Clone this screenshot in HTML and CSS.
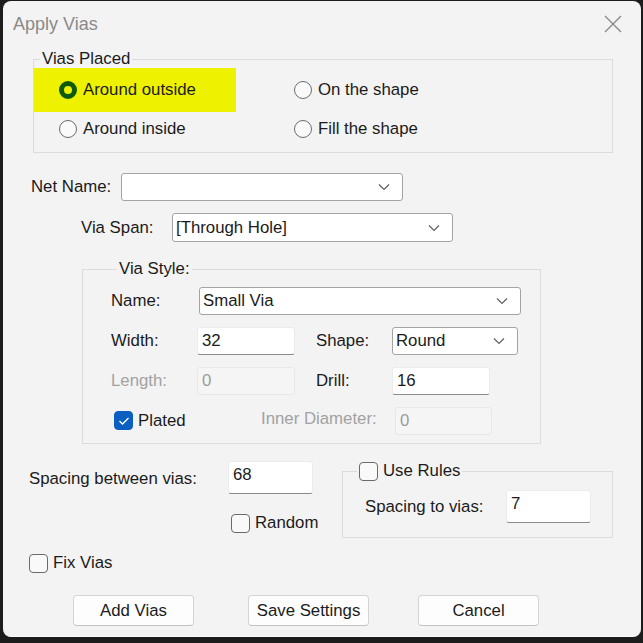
FILE: index.html
```html
<!DOCTYPE html>
<html>
<head>
<meta charset="utf-8">
<link rel="stylesheet" href="styles.css">
</head>
<body>
<div class="window">
  <div class="titlebar">
    <span class="title">Apply Vias</span>
    <svg class="close" width="18" height="18" viewBox="0 0 18 18"><path d="M1 1 L17 17 M17 1 L1 17" stroke="#8a8a8a" stroke-width="1.4" fill="none"/></svg>
  </div>

  <fieldset class="group placed">
    <legend>Vias Placed</legend>
    <div class="placed-grid">
      <label class="opt hl"><span class="radio on"></span>Around outside</label>
      <label class="opt"><span class="radio"></span>On the shape</label>
      <label class="opt row2"><span class="radio"></span>Around inside</label>
      <label class="opt row2"><span class="radio"></span>Fill the shape</label>
    </div>
  </fieldset>

  <div class="row netname">
    <span class="lbl">Net Name:</span>
    <div class="combo w-net"><span class="val"></span><svg class="chev" width="12" height="8" viewBox="0 0 12 8"><path d="M1 1.5 L6 6.5 L11 1.5" stroke="#606060" stroke-width="1.2" fill="none"/></svg></div>
  </div>

  <div class="row viaspan">
    <span class="lbl">Via Span:</span>
    <div class="combo w-span"><span class="val">[Through Hole]</span><svg class="chev" width="12" height="8" viewBox="0 0 12 8"><path d="M1 1.5 L6 6.5 L11 1.5" stroke="#606060" stroke-width="1.2" fill="none"/></svg></div>
  </div>

  <fieldset class="group style">
    <legend>Via Style:</legend>
    <div class="srow r-name">
      <span class="slbl">Name:</span>
      <div class="combo w-name"><span class="val">Small Via</span><svg class="chev" width="12" height="8" viewBox="0 0 12 8"><path d="M1 1.5 L6 6.5 L11 1.5" stroke="#606060" stroke-width="1.2" fill="none"/></svg></div>
    </div>
    <div class="srow r-width">
      <span class="slbl">Width:</span>
      <div class="edit w98">32</div>
      <span class="slbl2">Shape:</span>
      <div class="combo w-shape"><span class="val">Round</span><svg class="chev" width="12" height="8" viewBox="0 0 12 8"><path d="M1 1.5 L6 6.5 L11 1.5" stroke="#606060" stroke-width="1.2" fill="none"/></svg></div>
    </div>
    <div class="srow r-length">
      <span class="slbl dis">Length:</span>
      <div class="edit w98 disabled">0</div>
      <span class="slbl2">Drill:</span>
      <div class="edit w98">16</div>
    </div>
    <div class="srow r-plated">
      <label class="chk-label plated"><span class="check on"><svg width="12" height="10" viewBox="0 0 12 10"><path d="M1.5 5 L4.5 8 L10.5 2" stroke="#ffffff" stroke-width="1.4" fill="none"/></svg></span>Plated</label>
      <span class="inner-lbl dis">Inner Diameter:</span>
      <div class="edit w97 disabled">0</div>
    </div>
  </fieldset>

  <div class="lower">
    <div class="left-col">
      <div class="sp-row">
        <span class="sp-lbl">Spacing between vias:</span>
        <div class="edit tall">68</div>
      </div>
      <label class="chk-label random"><span class="check"></span>Random</label>
      <label class="chk-label fixvias"><span class="check"></span>Fix Vias</label>
    </div>
    <fieldset class="group rules">
      <legend><label class="chk-label"><span class="check"></span>Use Rules</label></legend>
      <div class="rules-row">
        <span class="rl-lbl">Spacing to vias:</span>
        <div class="edit tall">7</div>
      </div>
    </fieldset>
  </div>

  <div class="buttons">
    <button class="btn b1">Add Vias</button>
    <button class="btn b2">Save Settings</button>
    <button class="btn b3">Cancel</button>
  </div>
</div>
</body>
</html>
```
FILE: styles.css
```css
* { box-sizing: border-box; }
html, body { margin: 0; padding: 0; }
body {
  width: 643px;
  height: 643px;
  background: #1c1c1c;
  font-family: "Liberation Sans", Arial, sans-serif;
  font-size: 16.8px;
  color: #1b1b1b;
  overflow: hidden;
  padding: 1px 2px 0 3px;
}
.window {
  width: 638px;
  height: 636px;
  background: #f3f3f3;
  border-radius: 8px;
  border-bottom: 1px solid #fafafa;
  position: relative;
}
.titlebar {
  height: 46px;
  display: flex;
  align-items: center;
  justify-content: space-between;
  padding: 0 19px 0 10px;
}
.title {
  font-size: 18px;
  color: #8a8a8a;
}

.group {
  border: 1px solid #dcdcdc;
  margin: 0;
  padding: 0;
  min-width: 0;
}
.group legend {
  margin-left: 6px;
  padding: 0 2px;
  line-height: 16px;
}
.placed {
  margin: 4px 0 0 30px;
  width: 580px;
  height: 102px;
}
.placed-grid {
  display: grid;
  grid-template-columns: 260px auto;
  grid-template-rows: 44px 32px;
  padding-top: 1px;
}
.opt {
  display: flex;
  align-items: center;
  gap: 6px;
}
.opt.hl {
  background: #eef200;
  width: 202px;
  padding-left: 25px;
}
.radio {
  width: 18px;
  height: 18px;
  border-radius: 50%;
  border: 1px solid #6c6c6c;
  background: #fafafa;
  display: inline-block;
  flex: none;
}
.row2 { padding-top: 1px; }
.row2:nth-child(3) { padding-left: 25px; }
.radio.on {
  border: 5px solid #0d5a07;
  background: #eef200;
}

.row {
  display: flex;
  align-items: center;
}
.netname { margin: 20px 0 0 28px; height: 28px; }
.netname .lbl { width: 90px; }
.viaspan { margin: 12px 0 0 78px; height: 29px; }
.viaspan .lbl { width: 91px; }

.combo {
  height: 28px;
  background: #ffffff;
  border: 1px solid #a4a4a4;
  border-radius: 3px;
  display: flex;
  align-items: center;
  justify-content: space-between;
  padding: 0 12px 0 3px;
}
.w-net { width: 282px; }
.w-span { width: 281px; height: 29px; }
.w-name { width: 322px; margin-left: 2px; }
.w-shape { width: 126px; }

.style {
  margin: 19px 0 0 79px;
  width: 459px;
  height: 183px;
  padding: 10px 0 0 28px;
}
.srow {
  display: flex;
  align-items: center;
  height: 28px;
}
.r-width { margin-top: 12px; }
.r-length { margin-top: 12px; }
.r-plated { margin-top: 12px; height: 27px; }
.slbl { width: 86px; }
.slbl2 { width: 76px; margin-left: 21px; }
.dis { color: #a2a2a2; }

.edit {
  height: 28px;
  background: #ffffff;
  border: 1px solid #ececec;
  border-bottom: 1px solid #8a8a8a;
  border-radius: 3px;
  padding: 3px 4px 0 4px;
  line-height: 20px;
}
.edit.disabled {
  background: #f5f5f5;
  border: 1px solid #e8e8e8;
  color: #9c9c9c;
}
.w98 { width: 98px; }
.w97 { width: 97px; }
.edit.tall { width: 85px; height: 33px; padding-top: 3px; }

.chk-label {
  display: flex;
  align-items: center;
  gap: 5px;
}
.check {
  width: 19px;
  height: 19px;
  border: 1px solid #6a6a6a;
  border-radius: 4px;
  background: #f9f9f9;
  display: inline-flex;
  align-items: center;
  justify-content: center;
  flex: none;
}
.check.on {
  background: #0a5fc0;
  border-color: #0a5fc0;
}
.plated { margin-left: 3px; width: 147px; }
.inner-lbl { width: 134px; position: relative; top: -2px; }

.lower {
  display: flex;
  margin-top: 17px;
  padding-left: 26px;
}
.left-col { width: 313px; }
.sp-row {
  display: flex;
  align-items: center;
  height: 33px;
}
.sp-lbl { width: 199px; position: relative; top: 1px; }
.random { margin: 19px 0 0 202px; height: 20px; }
.fixvias { margin: 20px 0 0 0; height: 20px; }

.rules {
  width: 271px;
  height: 77px;
  margin-top: 0;
  padding: 0;
}
.rules legend { margin-left: 14px; padding: 0 2px; line-height: 20px; }
.rules-row {
  display: flex;
  align-items: center;
  height: 33px;
  margin: 9px 0 0 22px;
}
.rl-lbl { width: 141px; }

.buttons {
  display: flex;
  margin-top: 22px;
  padding-left: 70px;
}
.btn {
  width: 121px;
  height: 31px;
  background: #fdfdfd;
  border: 1px solid #d4d4d4;
  border-bottom-color: #c2c2c2;
  border-radius: 4px;
  font-family: "Liberation Sans", Arial, sans-serif;
  font-size: 16.8px;
  color: #1b1b1b;
  padding: 0;
}
.b2 { margin-left: 54px; }
.b3 { margin-left: 49px; }
```
